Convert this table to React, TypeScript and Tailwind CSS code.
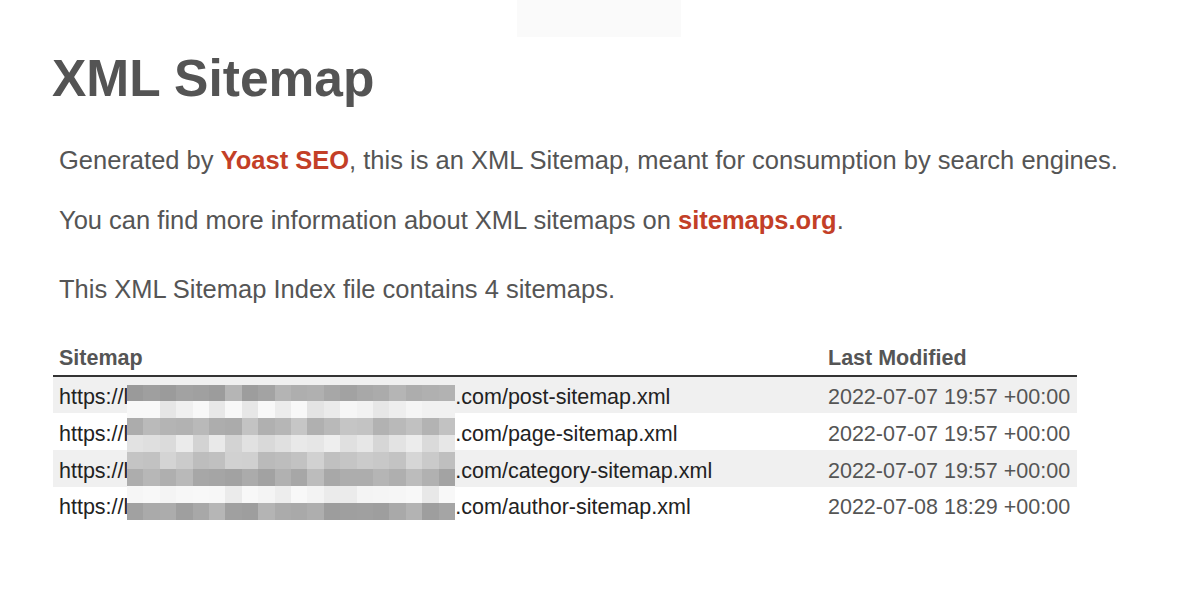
import React from "react";

const rows = [
  { path: ".com/post-sitemap.xml", date: "2022-07-07 19:57 +00:00" },
  { path: ".com/page-sitemap.xml", date: "2022-07-07 19:57 +00:00" },
  { path: ".com/category-sitemap.xml", date: "2022-07-07 19:57 +00:00" },
  { path: ".com/author-sitemap.xml", date: "2022-07-08 18:29 +00:00" },
];

const rowBase = [168, 242, 184, 224, 200, 174, 242, 170];

function cellColor(r: number, c: number) {
  const h = Math.sin(r * 12.9898 + c * 78.233) * 43758.5453;
  const f = h - Math.floor(h);
  const v = Math.max(150, Math.min(248, Math.round(rowBase[r] + (f - 0.5) * 28)));
  return `rgb(${v},${v},${v})`;
}

function Mosaic() {
  const cells = [];
  for (let r = 0; r < 8; r++) {
    for (let c = 0; c < 20; c++) {
      cells.push(
        <div key={`${r}-${c}`} style={{ backgroundColor: cellColor(r, c) }} />
      );
    }
  }
  return (
    <div className="absolute left-[74px] top-[44px] grid h-[135px] w-[328px] grid-cols-20 grid-rows-8 blur-[0.6px]">
      {cells}
    </div>
  );
}

export default function App() {
  return (
    <div className="h-[590px] w-[1200px] overflow-hidden bg-white font-['Liberation_Sans',Arial,sans-serif] text-[#555]">
      <div className="ml-[517px] h-[37px] w-[164px] bg-[#fafafa]" />
      <h1 className="ml-[52px] mt-[16px] text-[51.5px] font-bold leading-none text-[#545454]">
        XML Sitemap
      </h1>
      <p className="ml-[59px] mt-[40px] text-[25.5px] leading-[30px]">
        Generated by{" "}
        <span className="font-bold text-[#c33f27]">Yoast SEO</span>, this is an XML Sitemap, meant
        for consumption by search engines.
      </p>
      <p className="ml-[59px] mt-[30px] text-[25.5px] leading-[30px]">
        You can find more information about XML sitemaps on{" "}
        <span className="font-bold text-[#c33f27]">sitemaps.org</span>.
      </p>
      <p className="ml-[59px] mt-[39px] text-[25.5px] leading-[30px]">
        This XML Sitemap Index file contains 4 sitemaps.
      </p>
      <div className="relative ml-[53px] mt-[37px] w-[1024px]">
        <div className="flex h-[36px] items-center border-b-2 border-[#333] pt-[2px] text-[21.5px] font-bold text-[#555]">
          <div className="w-[769px] pl-[6px]">Sitemap</div>
          <div className="pl-[6px]">Last Modified</div>
        </div>
        {rows.map((r, i) => (
          <div
            key={i}
            className={`flex h-[36.7px] items-center pt-[5px] text-[21.5px] ${i % 2 === 0 ? "bg-[#f0f0f0]" : "bg-white"}`}
          >
            <div className="flex w-[769px] pl-[6px] text-[#222]">
              <span>https://l</span>
              <span className="inline-block w-[327px]" />
              <span>{r.path}</span>
            </div>
            <div className="pl-[6px] text-[#555]">{r.date}</div>
          </div>
        ))}
        <Mosaic />
      </div>
    </div>
  );
}
